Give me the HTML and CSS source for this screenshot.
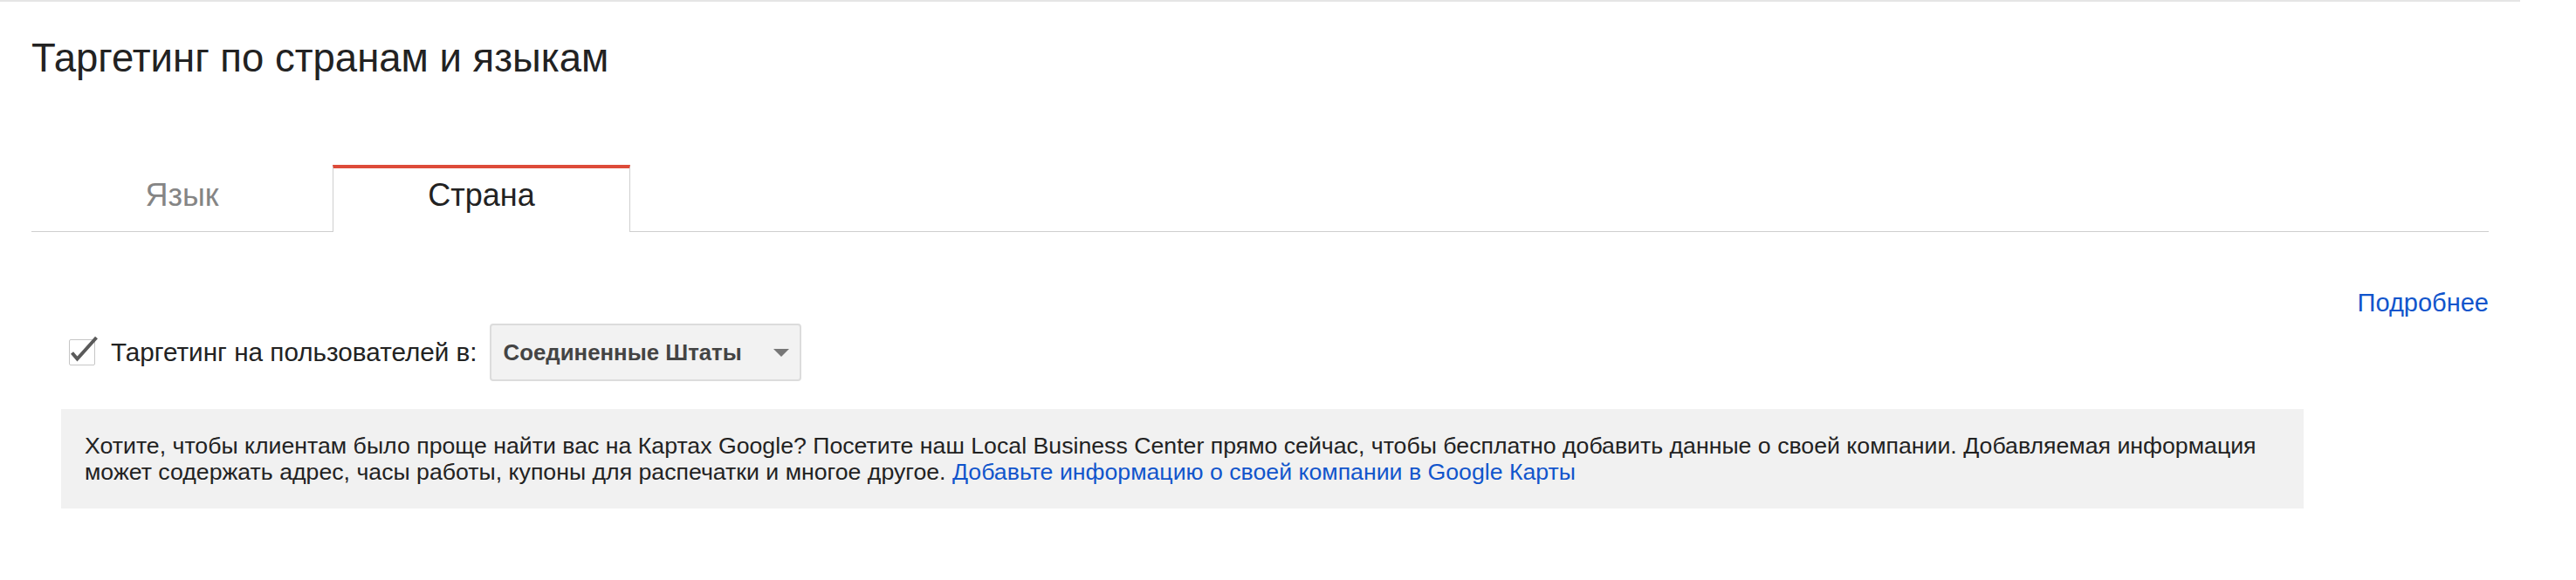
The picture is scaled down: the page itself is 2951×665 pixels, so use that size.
FILE: index.html
```html
<!DOCTYPE html>
<html lang="ru">
<head>
<meta charset="utf-8">
<title>Таргетинг по странам и языкам</title>
<link rel="stylesheet" href="styles.css">
</head>
<body>
<div class="page">
  <h1 class="title">Таргетинг по странам и языкам</h1>
  <div class="tabs">
    <div class="tab">Язык</div>
    <div class="tab tab-active">Страна</div>
  </div>
  <div class="more-row"><a class="link" href="#">Подробнее</a></div>
  <div class="target-row">
    <span class="checkbox">
      <svg class="check-svg" width="30" height="30" viewBox="0 0 30 30">
        <rect x="0.5" y="0.5" width="29" height="29" rx="1.5" fill="#fff" stroke="#c6c6c6" stroke-width="1"/>
        <path d="M3.5 15.5 L9.5 22.5 L31.5 -2" fill="none" stroke="#5a5a5a" stroke-width="4"/>
      </svg>
    </span>
    <span class="label">Таргетинг на пользователей в:</span>
    <div class="select">
      <span class="select-text">Соединенные Штаты</span>
      <span class="arrow"></span>
    </div>
  </div>
  <div class="info"><span>Хотите, чтобы клиентам было проще найти вас на Картах Google? Посетите наш Local Business Center прямо сейчас, чтобы бесплатно добавить данные о своей компании. Добавляемая информация</span> <span>может содержать адрес, часы работы, купоны для распечатки и многое другое.</span> <a class="link" href="#">Добавьте информацию о своей компании в Google Карты</a></div>
</div>
</body>
</html>
```
FILE: styles.css
```css
html, body {
  margin: 0;
  padding: 0;
  background: #fff;
}
body {
  font-family: "Liberation Sans", Arial, sans-serif;
  color: #222;
}
.page {
  width: 2887px;
  box-sizing: border-box;
  border-top: 2px solid #e5e5e5;
  padding: 0 36px;
}
.title {
  margin: 39px 0 0;
  font-size: 45.5px;
  line-height: 52px;
  font-weight: normal;
  color: #222;
}
.tabs {
  display: flex;
  margin-top: 96px;
  border-bottom: 1px solid #cfcfcf;
}
.tab {
  box-sizing: border-box;
  width: 345px;
  height: 76px;
  border-top: 4px solid transparent;
  padding-top: 10px;
  font-size: 36px;
  line-height: 42px;
  text-align: center;
  color: #858585;
}
.tab-active {
  width: 341px;
  border-top: 4px solid #dd4b39;
  border-left: 1px solid #cfcfcf;
  border-right: 1px solid #cfcfcf;
  color: #222;
  background: #fff;
  height: 77px;
  margin-bottom: -1px;
}
.more-row {
  margin-top: 64px;
  text-align: right;
  font-size: 29px;
  line-height: 34px;
}
.link {
  color: #1155cc;
  text-decoration: none;
}
.target-row {
  display: flex;
  align-items: center;
  margin-top: 7px;
  padding-left: 43px;
  height: 66px;
}
.checkbox {
  display: block;
  width: 30px;
  height: 30px;
  margin-right: 18px;
}
.check-svg {
  display: block;
  overflow: visible;
}
.label {
  font-size: 29.7px;
  line-height: 34px;
  color: #222;
  margin-right: 14px;
}
.select {
  box-sizing: border-box;
  width: 357px;
  height: 66px;
  display: flex;
  align-items: center;
  justify-content: space-between;
  padding: 0 12px 0 14px;
  border: 2px solid #dcdcdc;
  border-radius: 4px;
  background: #f2f2f2;
}
.select-text {
  font-size: 25.8px;
  line-height: 30px;
  font-weight: bold;
  color: #444;
}
.arrow {
  width: 0;
  height: 0;
  border-left: 9px solid transparent;
  border-right: 9px solid transparent;
  border-top: 9px solid #777;
}
.info {
  box-sizing: border-box;
  width: 2569px;
  margin: 32px 0 0 34px;
  padding: 27px 27px 27px 27px;
  background: #f1f1f1;
  font-size: 26.7px;
  line-height: 30px;
  color: #222;
}
```
